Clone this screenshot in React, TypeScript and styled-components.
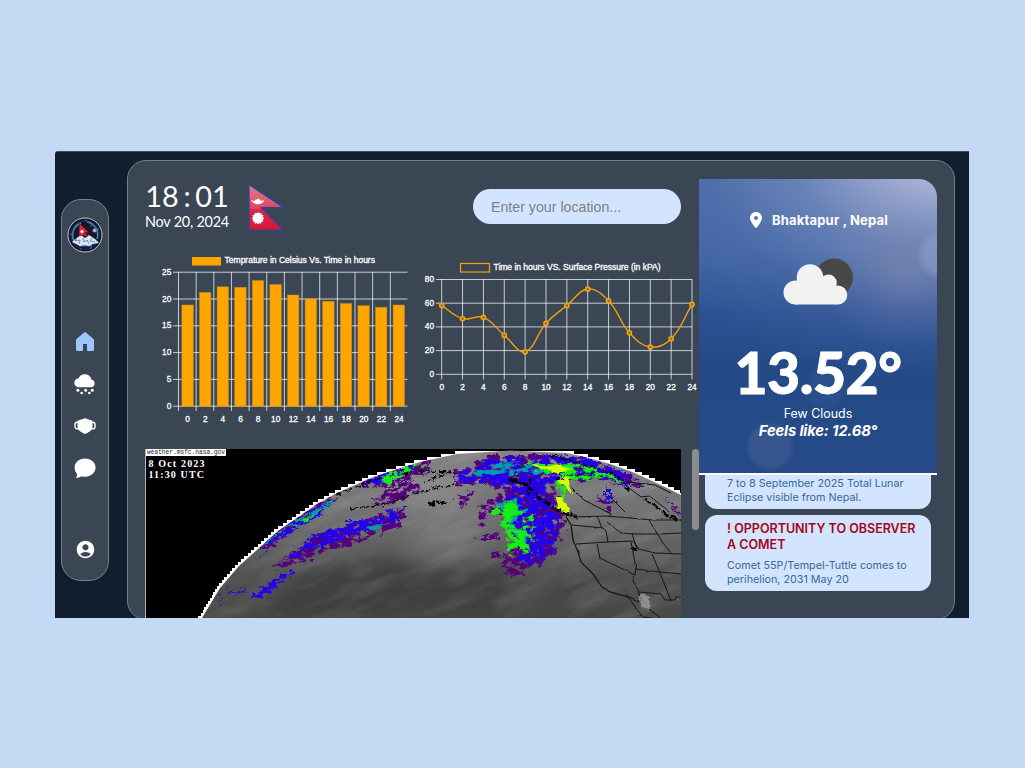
import React from "react";
import styled, { createGlobalStyle } from "styled-components";
import { GoHomeFill } from "react-icons/go";
import { FaLocationDot } from "react-icons/fa6";
import { MdAccountCircle } from "react-icons/md";

const GlobalStyle = createGlobalStyle`
  * { box-sizing: border-box; }
  body { margin: 0; background: #c4d9f4; font-family: "Liberation Sans", Arial, sans-serif; }
  p, h2, h3 { margin: 0; }
`;

const Page = styled.div`
  height: 768px;
  padding: 151px 56px 0 55px;
  overflow: hidden;
  background: #c4d9f4;
`;

const Frame = styled.div`
  display: flex;
  gap: 18px;
  width: 914px;
  height: 467px;
  padding: 8px 14px 0 6px;
  overflow: hidden;
  background: #101e2d;
  border-top: 1px solid #34515c;
  border-radius: 3px 0 0 0;
`;

const Sidebar = styled.nav`
  display: flex;
  flex-direction: column;
  align-items: center;
  width: 48px;
  height: 382px;
  margin-top: 39px;
  padding-top: 17px;
  background: #3a4653;
  border: 1px solid #77808a;
  border-radius: 20px;
`;

const NavList = styled.div`
  display: flex;
  flex-direction: column;
  align-items: center;
  gap: 20px;
  margin-top: 78px;
`;

const NavItem = styled.span<{ $active?: boolean; $top?: number }>`
  display: flex;
  align-items: center;
  justify-content: center;
  width: 24px;
  height: 22px;
  margin-top: ${(p) => p.$top ?? 0}px;
  color: ${(p) => (p.$active ? "#a0c6ff" : "#fff")};
`;

const Panel = styled.main`
  display: flex;
  width: 828px;
  height: 460px;
  padding: 18px 17px 0 17px;
  background: #3a4653;
  border: 1px solid #77808a;
  border-radius: 19px;
`;

const LeftColumn = styled.section`
  width: 554px;
  flex: none;
`;

const Header = styled.header`
  display: flex;
  align-items: flex-start;
  height: 70px;
`;

const Clock = styled.div`
  width: 84px;
  color: #fff;
  text-align: center;
  font-family: Lato, sans-serif;
  white-space: nowrap;
`;

const Time = styled.p`
  font-size: 28.8px;
  line-height: 34px;
  word-spacing: -2.6px;
`;

const DateText = styled.p`
  font-size: 14.4px;
  line-height: 18px;
  letter-spacing: -0.22px;
`;

const FlagBox = styled.div`
  width: 42px;
  height: 54px;
  margin: 2px 0 0 17px;
`;

const Search = styled.input`
  width: 208px;
  height: 35px;
  margin: 10px 18px 0 auto;
  padding: 0 18px;
  border: 0;
  border-radius: 18px;
  background: #d3e4ff;
  font: 14.2px "Liberation Sans", Arial, sans-serif;
  &::placeholder { color: #7c8086; opacity: 1; }
`;

const Charts = styled.div`
  display: flex;
  height: 200px;
`;

const Chart = styled.svg`
  display: block;
  flex: none;
  overflow: visible;
  font-family: "Liberation Sans", Arial, sans-serif;
  font-size: 8.3px;
  fill: #fff;
  text { stroke: #fff; stroke-width: 0.3px; }
`;

const SatelliteRow = styled.div`
  display: flex;
  justify-content: space-between;
`;

const Satellite = styled.svg`
  display: block;
  background: #000;
`;

const ScrollThumb = styled.div`
  width: 7px;
  height: 81px;
  border-radius: 4px;
  background: #8b8b8b;
`;

const RightColumn = styled.aside`
  width: 238px;
  flex: none;
  font-family: Inter, sans-serif;
`;

const WeatherCard = styled.div`
  display: flex;
  flex-direction: column;
  align-items: center;
  height: 294px;
  padding-top: 32px;
  color: #fff;
  border-radius: 0 18px 4px 0;
  background:
    radial-gradient(circle at 71px 267px, rgba(120, 130, 160, 0.2) 0 20px, transparent 25px),
    radial-gradient(circle at 127px 209px, rgba(100, 130, 180, 0.1) 0 16px, transparent 22px),
    radial-gradient(ellipse 24px 26px at 240px 76px, rgba(165, 180, 218, 0.35) 0 60%, transparent 95%),
    radial-gradient(ellipse 90px 75px at 208px 95px, rgba(135, 140, 174, 0.5), rgba(130, 137, 174, 0.22) 50%, transparent),
    radial-gradient(ellipse 340px 225px at 240px -22px, #bec3df 0%, rgba(162, 173, 211, 0.85) 20%, rgba(130, 150, 196, 0.56) 42%, rgba(95, 124, 182, 0.25) 68%, transparent 100%),
    linear-gradient(180deg, #496ba7 0, #4165a3 24%, #2c5193 46%, #234a86 64%, #264b88 100%);
`;

const Place = styled.div`
  display: flex;
  align-items: center;
  gap: 8px;
  height: 18px;
  font-size: 13px;
  font-weight: 700;
  letter-spacing: 0.18px;
`;

const CloudIcon = styled.svg`
  display: block;
  margin-top: 29px;
`;

const Temperature = styled.h2`
  margin-top: 35px;
  font: 900 57px/64px Lato, sans-serif;
  letter-spacing: -0.4px;
  -webkit-text-stroke: 0.9px #fff;
`;

const Condition = styled.p`
  margin-top: 1px;
  font-size: 12.4px;
  line-height: 17px;
`;

const FeelsLike = styled.p`
  font-size: 14.8px;
  line-height: 19px;
  font-weight: 700;
  font-style: italic;
  letter-spacing: -0.15px;
`;

const Events = styled.div`
  display: flex;
  flex-direction: column;
  gap: 6px;
  padding: 0 6px;
  border-top: 2px solid #fff;
`;

const EventCard = styled.article<{ $cut?: boolean }>`
  height: ${(p) => (p.$cut ? 34 : 76)}px;
  padding: ${(p) => (p.$cut ? "2px" : "6px")} 0 0 22px;
  border-radius: ${(p) => (p.$cut ? "0 0 12px 12px" : "12px")};
  background: #d3e4ff;
  white-space: nowrap;
`;

const EventTitle = styled.h3`
  margin-bottom: 6px;
  color: #a30618;
  font-size: 12.5px;
  line-height: 16.2px;
  font-weight: 600;
`;

const EventText = styled.p`
  color: #34699b;
  font-size: 10.75px;
  line-height: 13.6px;
`;

const Logo = () => (
  <svg width="36" height="36" viewBox="0 0 36 36">
    <circle cx="18" cy="18" r="17" fill="#10132c" stroke="#c3c6cf" strokeWidth="1" />
    <circle cx="18" cy="18" r="14" fill="#15152d" stroke="#26264a" strokeWidth="1.400" />
    <path d="M7 24A13 13 0 0 1 14 6M20 5A13 13 0 0 1 30 22" fill="none" stroke="#2390b4" strokeWidth="1.600" />
    <path d="M12 28.500h13" stroke="#327fae" strokeWidth="2" />
    <path d="M5 25l6-5 3-2 4 3 4-3 6 4 4 4-6 1-4 2-4-1-5 1z" fill="#dce5ef" />
    <path d="M10 21l-2 3 5-1-1 4M16 21l1 4 3-2 2 4M25 21l-2 3 5 1" fill="none" stroke="#6d8db8" strokeWidth="1" />
    <path d="M12.500 6.500l9 9h-4l3.500 3.500-5-1-4 1z" fill="#ef2038" stroke="#70213b" strokeWidth=".6" />
    <circle cx="15" cy="14.500" r="1.500" fill="#fff" />
    <circle cx="27.500" cy="13.500" r="2" fill="#b6a4b1" />
    <g fill="#c5cfe0">
      <circle cx="9" cy="9" r=".5" /><circle cx="19" cy="3.500" r=".5" /><circle cx="24" cy="9" r=".6" />
      <circle cx="31" cy="12" r=".5" /><circle cx="4" cy="17" r=".5" /><circle cx="14" cy="32" r=".5" /><circle cx="24" cy="31" r=".5" />
    </g>
  </svg>
);

const SnowIcon = () => (
  <svg width="22" height="22" viewBox="0 0 22 22" fill="currentColor">
    <path d="M5 14.300a4.500 4.500 0 0 1-.4-9A6.700 6.700 0 0 1 17.300 6.500 4 4 0 0 1 17.600 14.300z" />
    <circle cx="3.900" cy="17.300" r="1.500" /><circle cx="11.600" cy="17.300" r="1.500" /><circle cx="18.300" cy="17.300" r="1.500" />
    <circle cx="7.700" cy="20" r="1.300" /><circle cx="15.300" cy="20" r="1.300" />
  </svg>
);

const MaskIcon = () => (
  <svg width="22" height="18" viewBox="0 0 22 18">
    <rect x="1" y="5.300" width="20" height="6.600" rx="2.200" fill="none" stroke="currentColor" strokeWidth="1.400" />
    <path d="M11 1.200L17.800 3.600a1 1 0 0 1 .7 1v6.800Q16.500 14.500 11 17 5.500 14.500 3.500 11.400V4.600a1 1 0 0 1 .7-1z" fill="currentColor" />
  </svg>
);

const ChatIcon = () => (
  <svg width="22" height="21" viewBox="0 0 22 21" fill="currentColor">
    <path d="M11 .5C17 .5 21.600 4.600 21.600 9.600S17 18.800 11 18.800a12 12 0 0 1-3.600-.6C5.600 19.500 3.600 20 2 19.900c.9-1.200 1.200-2.600 1-4A8.600 8.600 0 0 1 .6 9.600C.6 4.600 5 .5 11 .5z" />
  </svg>
);

const Flag = () => {
  const rays = Array.from({ length: 24 }, (_, i) => {
    const r = i % 2 ? 5 : 6.3;
    const a = (i * Math.PI) / 12;
    return `${12 + r * Math.cos(a)},${37.2 + r * Math.sin(a)}`;
  }).join(" ");
  return (
    <svg width="42" height="54" viewBox="0 0 42 54">
      <defs>
        <linearGradient id="flagRed" x1="0" y1="0" x2="0" y2="1">
          <stop offset="0" stopColor="#e87b91" />
          <stop offset=".52" stopColor="#df4564" />
          <stop offset=".56" stopColor="#dc2348" />
          <stop offset="1" stopColor="#dc1439" />
        </linearGradient>
      </defs>
      <path d="M2.900 3.400L38.500 26.800H15.500L37.800 49.200H2.900z" fill="url(#flagRed)" stroke="#264a90" strokeWidth="1.500" />
      <path d="M5.400 18.600a6.800 6 0 0 0 13.200 0 7.500 7.500 0 0 1-3 1.700l-.8-1.900-1.300.3-1.500-1.500-1.500 1.500-1.300-.3-.8 1.900a7.500 7.500 0 0 1-3-1.700z" fill="#fff" />
      <polygon points={rays} fill="#fff" />
    </svg>
  );
};

const hours = [0, 2, 4, 6, 8, 10, 12, 14, 16, 18, 20, 22, 24];
const barTops = [305, 292.4, 286.8, 287.3, 280.5, 284.5, 295, 298.8, 301.2, 303.5, 305.7, 307.2, 305];
const pressure = [58, 47, 48, 33, 19, 43, 58, 72, 62, 35, 23, 30, 59];

const TemperatureChart = () => (
  <Chart width="275" height="185" viewBox="145 249 275 185">
    <rect x="192" y="257" width="29" height="8.500" fill="#ffa500" />
    <text x="224.500" y="263.200" textLength="150.500" fontSize="8.6">Temprature in Celsius Vs. Time in hours</text>
    <g stroke="#fff" strokeOpacity=".72">
      {[25, 20, 15, 10, 5, 0].map((v, i) => (
        <line key={v} x1="173" x2="407.500" y1={272.2 + i * 26.8} y2={272.2 + i * 26.8} />
      ))}
      {hours.map((h, i) => (
        <line key={h} x1={178.5 + i * 17.65} x2={178.5 + i * 17.65} y1="272" y2="411" />
      ))}
    </g>
    {[25, 20, 15, 10, 5, 0].map((v, i) => (
      <text key={v} x="171.300" y={274.8 + i * 26.8} textAnchor="end">{v}</text>
    ))}
    {hours.map((h, i) => (
      <g key={h}>
        <rect x={181.9 + i * 17.6} y={barTops[i]} width="11.400" height={406.2 - barTops[i]} fill="#ffa500" stroke="#c58a20" strokeWidth=".5" />
        <text x={187.6 + i * 17.62} y="421.500" textAnchor="middle">{h}</text>
      </g>
    ))}
  </Chart>
);

const points = pressure.map((v, i) => ({ x: 441.7 + i * 20.86, y: 374.3 - v * 1.185 }));

const smoothPath = (pts: { x: number; y: number }[], tension: number) => {
  const controls = pts.map((p, i) => {
    const prev = pts[Math.max(0, i - 1)];
    const next = pts[Math.min(pts.length - 1, i + 1)];
    const d1 = Math.hypot(p.x - prev.x, p.y - prev.y);
    const d2 = Math.hypot(next.x - p.x, next.y - p.y);
    const a = (tension * d1) / (d1 + d2);
    const b = (tension * d2) / (d1 + d2);
    const dx = next.x - prev.x;
    const dy = next.y - prev.y;
    return { inX: p.x - a * dx, inY: p.y - a * dy, outX: p.x + b * dx, outY: p.y + b * dy };
  });
  return pts.reduce((d, p, i) => {
    if (i === 0) return `M${p.x} ${p.y}`;
    const o = controls[i - 1];
    const c = controls[i];
    return `${d}C${o.outX} ${o.outY} ${c.inX} ${c.inY} ${p.x} ${p.y}`;
  }, "");
};

const PressureChart = () => (
  <Chart width="279" height="185" viewBox="420 249 279 185">
    <rect x="460.500" y="263.500" width="29" height="8.500" fill="none" stroke="#f3a10c" strokeWidth="1.200" />
    <text x="493.500" y="270.200" textLength="167" fontSize="8.6">Time in hours VS. Surface Pressure (in kPA)</text>
    <g stroke="#fff" strokeOpacity=".72">
      {[80, 60, 40, 20, 0].map((v, i) => (
        <line key={v} x1="436" x2="692" y1={279.5 + i * 23.7} y2={279.5 + i * 23.7} />
      ))}
      {points.map((p) => (
        <line key={p.x} x1={p.x} x2={p.x} y1="279" y2="379.500" />
      ))}
    </g>
    {[80, 60, 40, 20, 0].map((v, i) => (
      <text key={v} x="434" y={282 + i * 23.7} textAnchor="end">{v}</text>
    ))}
    {hours.map((h, i) => (
      <text key={h} x={points[i].x} y="389.500" textAnchor="middle">{h}</text>
    ))}
    <path d={smoothPath(points, 0.4)} fill="none" stroke="#f3a10c" strokeWidth="1.400" />
    {points.map((p) => (
      <circle key={p.x} cx={p.x} cy={p.y} r="2.100" fill="#80714a" stroke="#f9a306" strokeWidth="1.500" />
    ))}
  </Chart>
);

const leftLimb = [[57, 169], [75, 139], [94, 117], [113, 100], [133, 82], [152, 69], [172, 55], [192, 44], [228, 28], [275, 13], [312, 5], [365, 1.5]];
const rightLimb = [[365, 1.5], [422, 4], [444, 9], [465, 15], [485, 22], [505, 31], [520, 38], [540, 48]];

const limbX = (limb: number[][], y: number) => {
  for (let i = 1; i < limb.length; i++) {
    const [x0, y0] = limb[i - 1];
    const [x1, y1] = limb[i];
    if ((y - y0) * (y - y1) <= 0) return x0 + ((x1 - x0) * (y - y0)) / (y1 - y0);
  }
  return limb === leftLimb ? (y > 100 ? 55 : 365) : y > 40 ? 540 : 365;
};

const rim = Array.from({ length: 56 }, (_, i) => {
  const y = 2 + i * 3;
  const x = limbX(leftLimb, y + 3) - 2.5;
  return { x, y, width: limbX(rightLimb, y + 3) + 3 - x };
});

const globe = "M" + [...leftLimb, ...rightLimb.slice(1), [540, 170], [57, 170]].map((p) => p.join(" ")).join("L") + "Z";

const SatelliteImage = () => (
  <Satellite width="536" height="170" viewBox="0 0 536 170">
    <defs>
      <clipPath id="globe"><path d={globe} /></clipPath>
      <linearGradient id="ground" x1="0" y1="0" x2="0" y2="1">
        <stop offset="0" stopColor="#858585" />
        <stop offset=".4" stopColor="#707070" />
        <stop offset=".75" stopColor="#525252" />
        <stop offset="1" stopColor="#484848" />
      </linearGradient>
      <filter id="soft"><feGaussianBlur stdDeviation="9" /></filter>
      <filter id="haze" x="0" y="0" width="1" height="1">
        <feTurbulence type="fractalNoise" baseFrequency=".018 .07" numOctaves="6" seed="8" />
        <feColorMatrix values="0 0 0 0 1  0 0 0 0 1  0 0 0 0 1  2 0 0 0 -.85" />
      </filter>
      {[5, 17, 31, 44].map((seed, i) => (
        <filter key={seed} id={`ragged${i}`} x="-20%" y="-30%" width="140%" height="160%">
          <feTurbulence type="fractalNoise" baseFrequency={i < 2 ? ".13 .2" : ".1 .18"} numOctaves="5" seed={seed} result="n" />
          <feDisplacementMap in="SourceGraphic" in2="n" scale={i < 2 ? 14 : 10} xChannelSelector="R" yChannelSelector="G" result="d" />
          <feColorMatrix in="n" values="0 0 0 0 0  0 0 0 0 0  0 0 0 0 0  0 0 7 0 -2.5" result="m" />
          <feComposite in="d" in2="m" operator="in" />
        </filter>
      ))}
      <filter id="coast" x="-10%" y="-10%" width="120%" height="120%">
        <feTurbulence type="fractalNoise" baseFrequency=".2" numOctaves="3" seed="3" />
        <feDisplacementMap in="SourceGraphic" scale="6" xChannelSelector="R" yChannelSelector="G" />
      </filter>
      <filter id="border">
        <feTurbulence type="fractalNoise" baseFrequency=".15" numOctaves="2" seed="2" />
        <feDisplacementMap in="SourceGraphic" scale="2" xChannelSelector="R" yChannelSelector="G" />
      </filter>
    </defs>
    <g fill="#fff" shapeRendering="crispEdges">
      {rim.map((r) => (
        <rect key={r.y} x={r.x} y={r.y} width={r.width} height="3" />
      ))}
    </g>
    <g clipPath="url(#globe)">
      <rect width="536" height="170" fill="url(#ground)" />
      <g filter="url(#soft)">
        <path d="M120 170Q150 105 250 110T375 125L350 170z" fill="#3c3c3c" opacity=".85" />
        <path d="M270 70q40-20 65 0t-20 40-55-10z" fill="#828282" opacity=".35" />
        <path d="M420 125l-30 45h90l-25-35z" fill="#444" />
        <path d="M255 28h70v30h-80z" fill="#868686" />
      </g>
      <g transform="rotate(-20 268 85)"><rect x="-40" y="-110" width="620" height="390" filter="url(#haze)" opacity=".12" /></g>

      <g fill="#54007c" filter="url(#ragged0)">
        <path d="M112 102l30-31 55-29-5 9-36 23-31 23z" />
        <path d="M214 37l34-17 38-9v11l-42 16z" />
        <path d="M128 118l41-30 44-15 41-8 4 13-37 12-35 11-42 15z" />
        <path d="M229 50l33-18 14 7-18 12-28 8zM222 69l38-10-2 9-23 7z" />
        <path d="M309 24l39-18 90 1 50 20 12 12-43-8-47 2 12 47-20-13-33-15-28-18-32 2z" />
        <path d="M334 59l20-15 41-2 24 21-8 43-32 14-26-1 18-27-18-30-18 15zM327 90l28-6v8zM342 106l18-5v9z" />
        <path d="M309 50l20-7-10 15-10 1zM447 46l22 8-6 7zM515 45l23 18v7z" />
        <path d="M360 122l25-7-8 11-18 3z" />
      </g>
      <g fill="#2200ed" filter="url(#ragged1)">
        <path d="M114 100l31-26 40-22-10 14-35 22z" />
        <path d="M140 111l28-25 41-13 42-8 4 6-38 11-41 16z" />
        <path d="M83 146l20-8-8 8zM102 148l45-27 6 1-36 26zM70 158l15-14v-5z" />
        <path d="M217 33l45-18 8 5-34 16zM240 61l17-2-7 9zM114 110l10-13v4z" />
        <path d="M311 26l34-15 88-4 57 21-5 7-47-8-35 7 6 22-16 3-37-23-41-3z" />
        <path d="M339 63l21-15 33-4 22 24-9 38-25 11-8-9 4-18-23-38z" />
        <path d="M461 37l7 13-7 3zM345 111l13-4zM334 87l16-5zM464 50l3 6z" />
      </g>
      <g fill="#009caa" filter="url(#ragged2)">
        <path d="M150 73l39-22-17 15-24 12zM210 82l34-10-14 10zM145 101l12-7z" />
        <path d="M325 24l33-10 40 2 18 5-22 4-28-1-32 3zM351 55l19-6 13 12-13 8 16 20-10 7z" />
      </g>
      <g fill="#16ef12" filter="url(#ragged3)">
        <path d="M231 32l26-15 16-4-8 12-27 10z" />
        <path d="M378 15l40-3 28 7 35 13-34-2-26-1-24-5zM409 31l15 6-7 15z" />
        <path d="M345 60l25-9 6 12-12 11 19 15-8 12-17-22zM378 70l11-4-3 36-14 8z" />
        <path d="M361 90l12 4-9 12zM146 77l25-14-8 9z" />
      </g>
      <path d="M385 16l34 1 8 4-15 3zM416 30l7-2 4 18-7-9-9-4zM412 48l4 0 9 12-3 6-8-6z" fill="#d9ff00" filter="url(#coast)" />
      <path d="M118 96l28-21 22-13 23-13" fill="none" stroke="#09a981" strokeWidth="1.400" strokeDasharray="12 3 7 2" filter="url(#coast)" />

      <g fill="none" stroke="#050505" strokeWidth="1.400" strokeDasharray="7 2 3 1 5 3" filter="url(#coast)">
        <path d="M190 46l45-17M206 60l34-5 42-14 27-5M273 22l34 1-18 6-11 5M259 25l16-7" />
        <path d="M283 55l19-2" strokeWidth="4" />
        <path d="M365 30l18 6 12 14 21 13 16 5" strokeWidth="3.500" />
        <path d="M386 28l-2 18M404 6l30 8 29 9 22 13M411 29l32-5 16 4" />
        <path d="M500 50l11 7 12 10 13 5" strokeWidth="3" />
        <path d="M487 98l5 4M480 38l5 4" strokeWidth="3" />
      </g>
      <g fill="none" stroke="#151515" strokeWidth="1" filter="url(#border)">
        <path d="M421 68l5 8 2 15 5 12 3 10 12 12 9 13 8 5 22 6 7 4" strokeWidth="1.300" />
        <path d="M426 38l13 13 27 14-1 2M430 68l31-1 47 4 28 0M459 42l21 21M476 33l20 15 8-1 20 15M483 33l27 3 16 8" />
        <path d="M427 76l31 3 3 3 2 11-32 2M452 67l5 12M462 73l14 11 14 1 24 0 22-1M463 93l25-1 6 8 16 4 26 1" />
        <path d="M487 85l5 15M504 71l14 23 8 10M452 95l3 14 35 17 1-7-5-26M507 105l8 19 11 28M491 120l24 3 21 2" />
        <path d="M490 126l-2 6 6 11 22 2 4 6h10l1-3h5M481 145l9 13 8 10 8 1M493 143l4 8 9 11 10 7" />
      </g>
      <path d="M493 148l6-4 5 3 1 15-5-2z" fill="#aaa" opacity=".7" filter="url(#coast)" />
    </g>
    <path d="M.5 0v170" stroke="#aeb8c0" />
    <rect x="1" y="0" width="80" height="7" fill="#fff" />
    <text x="2" y="5.400" fill="#222" fontFamily="Liberation Mono, monospace" fontSize="6.800" textLength="78" lengthAdjust="spacingAndGlyphs">weather.msfc.nasa.gov</text>
    <g fill="#fff" fontFamily="Liberation Serif, serif" fontSize="10" fontWeight="700">
      <text x="3.500" y="17.500" textLength="56">8 Oct 2023</text>
      <text x="3.500" y="28.500" textLength="55.500">11:30 UTC</text>
    </g>
  </Satellite>
);

const navIcons = [
  { icon: <GoHomeFill size={24} />, active: true },
  { icon: <SnowIcon /> },
  { icon: <MaskIcon /> },
  { icon: <ChatIcon /> },
];

export default function App() {
  return (
    <Page>
      <GlobalStyle />
      <Frame>
        <Sidebar>
          <Logo />
          <NavList>
            {navIcons.map((n, i) => (
              <NavItem key={i} $active={n.active}>{n.icon}</NavItem>
            ))}
            <NavItem $top={39}><MdAccountCircle size={21} /></NavItem>
          </NavList>
        </Sidebar>
        <Panel>
          <LeftColumn>
            <Header>
              <Clock>
                <Time>18 : 01</Time>
                <DateText>Nov 20, 2024</DateText>
              </Clock>
              <FlagBox><Flag /></FlagBox>
              <Search placeholder="Enter your location..." />
            </Header>
            <Charts>
              <TemperatureChart />
              <PressureChart />
            </Charts>
            <SatelliteRow>
              <SatelliteImage />
              <ScrollThumb />
            </SatelliteRow>
          </LeftColumn>
          <RightColumn>
            <WeatherCard>
              <Place>
                <FaLocationDot size={16} />
                <span>Bhaktapur , Nepal</span>
              </Place>
              <CloudIcon width="70" height="47" viewBox="0 0 70 47">
                <circle cx="51" cy="19.500" r="19" fill="#484848" />
                <g fill="#f2f2f0">
                  <circle cx="12.500" cy="34.500" r="12" />
                  <circle cx="27" cy="19.500" r="13.300" />
                  <circle cx="45.500" cy="24.800" r="8.300" />
                  <circle cx="54.800" cy="37" r="9.500" />
                  <path d="M12 30l12-10h20l10 12v14.500H12z" />
                </g>
              </CloudIcon>
              <Temperature>13.52°</Temperature>
              <Condition>Few Clouds</Condition>
              <FeelsLike>Feels like: 12.68°</FeelsLike>
            </WeatherCard>
            <Events>
              <EventCard $cut>
                <EventText>7 to 8 September 2025 Total Lunar<br />Eclipse visible from Nepal.</EventText>
              </EventCard>
              <EventCard>
                <EventTitle>! OPPORTUNITY TO OBSERVER<br />A COMET</EventTitle>
                <EventText>Comet 55P/Tempel-Tuttle comes to<br />perihelion, 2031 May 20</EventText>
              </EventCard>
            </Events>
          </RightColumn>
        </Panel>
      </Frame>
    </Page>
  );
}
